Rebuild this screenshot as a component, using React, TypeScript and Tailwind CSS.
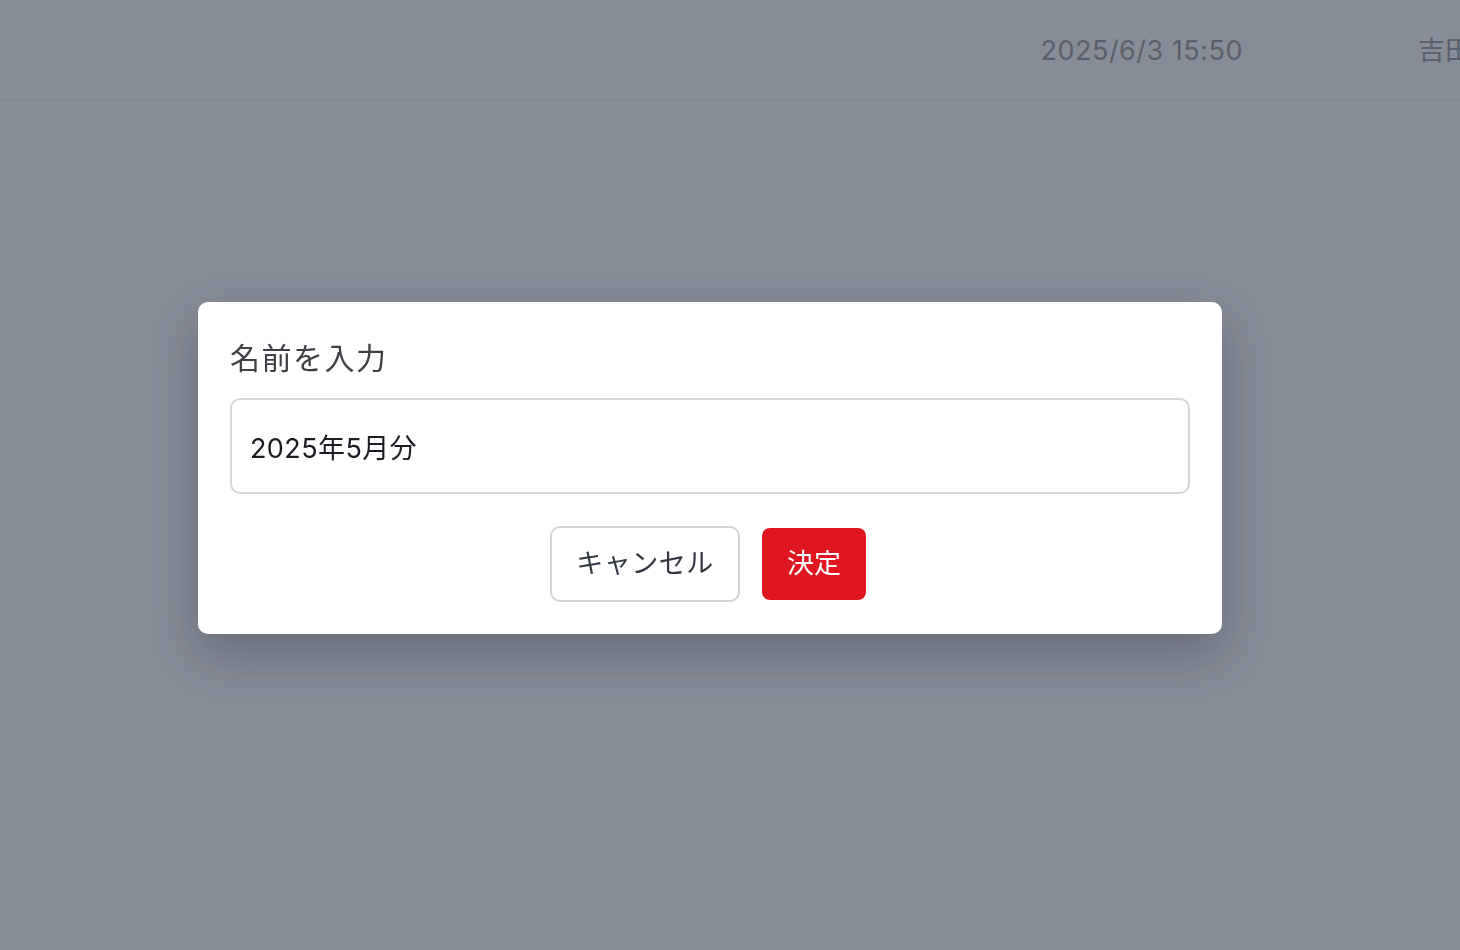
import { useState } from 'react';

const font = { fontFamily: '"Inter", "Noto Sans CJK JP", sans-serif' };

export default function App() {
  const [name, setName] = useState('2025年5月分');

  return (
    <div className="relative min-h-screen w-full overflow-hidden bg-[#878d97]" style={font}>
      {/* Header (behind overlay) */}
      <header className="h-[100px] border-b border-[#7d838d] overflow-hidden">
        <div className="flex h-full items-center justify-end gap-[175px] -mr-[80px] pt-1 whitespace-nowrap">
          <span className="text-[27px] text-[#5a5f6a] tracking-[0.5px]">2025/6/3 15:50</span>
          <span className="w-[122px] text-[27px] text-[#5a5f6a]">吉田 太郎</span>
        </div>
      </header>

      {/* Dialog overlay */}
      <div className="fixed inset-0 flex items-center justify-center pr-10 pb-[14px]">
        <div className="w-[1024px] rounded-[10px] bg-white p-8 shadow-[0_20px_50px_rgba(40,45,60,0.35)]">
          <h2 className="mb-4 text-[30px] leading-[48px] tracking-[1.5px] text-[#3f3f46]">名前を入力</h2>
          <input
            value={name}
            onChange={(e) => setName(e.target.value)}
            className="block h-[96px] w-full rounded-[10px] border-2 border-[#d4d7de] px-[18px] text-[27px] tracking-[0.4px] text-[#1a1d24] outline-none"
          />
          <div className="mt-8 flex items-center justify-center gap-[22px] pr-1">
            <button className="h-[76px] w-[190px] rounded-[10px] border-2 border-[#d1d5db] bg-white text-[27px] tracking-[0.5px] text-[#333842]">
              キャンセル
            </button>
            <button className="h-[72px] w-[104px] rounded-[8px] bg-[#df1520] text-[27px] text-white">
              決定
            </button>
          </div>
        </div>
      </div>
    </div>
  );
}
